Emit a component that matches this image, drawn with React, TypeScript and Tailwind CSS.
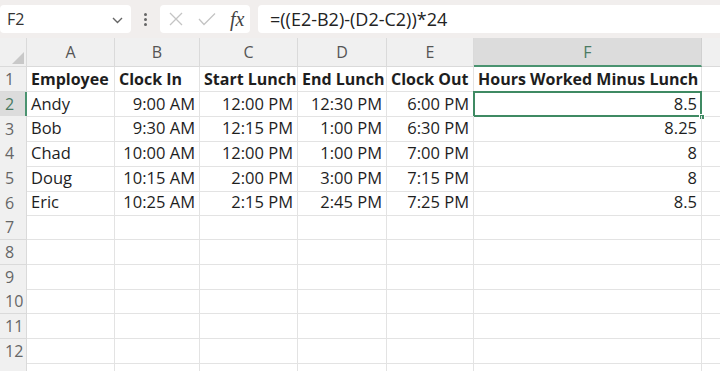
import React from 'react';

const COLS = ['A', 'B', 'C', 'D', 'E', 'F'];

const ROWS: string[][] = [
  ['Employee', 'Clock In', 'Start Lunch', 'End Lunch', 'Clock Out', 'Hours Worked Minus Lunch'],
  ['Andy', '9:00 AM', '12:00 PM', '12:30 PM', '6:00 PM', '8.5'],
  ['Bob', '9:30 AM', '12:15 PM', '1:00 PM', '6:30 PM', '8.25'],
  ['Chad', '10:00 AM', '12:00 PM', '1:00 PM', '7:00 PM', '8'],
  ['Doug', '10:15 AM', '2:00 PM', '3:00 PM', '7:15 PM', '8'],
  ['Eric', '10:25 AM', '2:15 PM', '2:45 PM', '7:25 PM', '8.5'],
];

const GRID = 'grid grid-cols-[27px_88px_85px_98px_89px_87px_228px_1fr]';

export default function App() {
  // 13th row only peeks in at the bottom edge, so its label stays blank
  const rows = Array.from({ length: 13 }, (_, i) => ROWS[i] ?? ['', '', '', '', '', '']);

  return (
    <div className="w-[720px] h-[371px] overflow-hidden bg-[#f3f2f1] font-['Open_Sans',sans-serif] text-[#222]">
      {/* formula bar */}
      <div className="h-[38px] pt-[5px] flex items-start bg-[#f1eeed]">
        <div className="w-[131px] h-[28px] bg-white rounded-sm flex items-center justify-between pl-[7px] pr-[8px]">
          <span className="text-[16px] text-[#333]">F2</span>
          <svg width="11" height="7" viewBox="0 0 11 7" className="mt-[2px]">
            <path d="M1 1 L5.5 5.5 L10 1" fill="none" stroke="#666" strokeWidth="1.4" />
          </svg>
        </div>
        <div className="w-[29px] h-[28px] flex flex-col items-center justify-center gap-[2px]">
          <span className="w-[3px] h-[3px] rounded-full bg-[#666]" />
          <span className="w-[3px] h-[3px] rounded-full bg-[#666]" />
          <span className="w-[3px] h-[3px] rounded-full bg-[#666]" />
        </div>
        <div className="w-[90px] h-[28px] bg-white rounded-sm flex items-center pl-[8px] gap-[14px]">
          <svg width="16" height="16" viewBox="0 0 16 16">
            <path d="M2 2 L14 14 M14 2 L2 14" stroke="#c4c4c4" strokeWidth="1.3" />
          </svg>
          <svg width="18" height="14" viewBox="0 0 18 14">
            <path d="M1 7 L6 12.5 L17 1.5" fill="none" stroke="#c4c4c4" strokeWidth="1.3" />
          </svg>
          <span className="font-['Liberation_Serif',serif] italic text-[20px] text-[#444] leading-none">fx</span>
        </div>
        <div className="ml-[8px] flex-1 h-[28px] bg-white rounded-l-sm flex items-center pl-[12px]">
          <span className="text-[18px] text-[#222]">=((E2-B2)-(D2-C2))*24</span>
        </div>
      </div>

      {/* column headers */}
      <div className={`${GRID} h-[29px] bg-[#f0f0f0]`}>
        <div className="relative border-r border-b border-[#dadada]">
          <svg width="12" height="12" viewBox="0 0 12 12" className="absolute right-[2px] bottom-[2px]">
            <path d="M12 0 L12 12 L0 12 Z" fill="#c8c8c8" />
          </svg>
        </div>
        {COLS.map((c) =>
          c === 'F' ? (
            <div key={c} className="flex items-center justify-center bg-[#dcdcdc] border-b-2 border-[#4a9370] border-r border-r-[#d0d0d0] text-[16px] text-[#4a7a62]">
              {c}
            </div>
          ) : (
            <div key={c} className="flex items-center justify-center border-r border-b border-[#dadada] text-[16px] text-[#555]">
              {c}
            </div>
          )
        )}
        <div className="border-b border-[#dadada]" />
      </div>

      {/* rows */}
      {rows.map((r, i) => {
        const n = i + 1;
        const sel = n === 2;
        return (
          <div key={n} className={`${GRID} h-[24.7px] bg-white`}>
            <div
              className={
                sel
                  ? 'flex items-center pl-[5px] bg-[#dcdcdc] border-r-2 border-[#4a9370] border-b border-b-[#dadada] text-[16px] text-[#4a7a62]'
                  : 'flex items-center pl-[5px] bg-[#f0f0f0] border-r border-b border-[#dadada] text-[16px] text-[#666]'
              }
            >
              {n <= 12 ? n : ''}
            </div>
            {r.map((v, j) => {
              const header = n === 1;
              const right = !header && j > 0;
              const isSel = sel && j === 5;
              return (
                <div
                  key={j}
                  className={`relative flex items-center border-r border-b border-[#e3e3e3] text-[16.5px] text-[#1e1e1e] whitespace-nowrap ${
                    header ? 'font-bold text-[16px] pl-[4px]' : right ? 'justify-end pr-[4px]' : 'pl-[4px]'
                  }`}
                >
                  {v}
                  {isSel && (
                    <>
                      <div className="absolute -left-px -top-px -right-px -bottom-px border-2 border-[#3f8a63]" />
                      <div className="absolute -right-[4px] -bottom-[4px] w-[6px] h-[6px] bg-[#3f8a63] border border-white" />
                    </>
                  )}
                </div>
              );
            })}
            <div className="border-b border-[#e3e3e3]" />
          </div>
        );
      })}
    </div>
  );
}
